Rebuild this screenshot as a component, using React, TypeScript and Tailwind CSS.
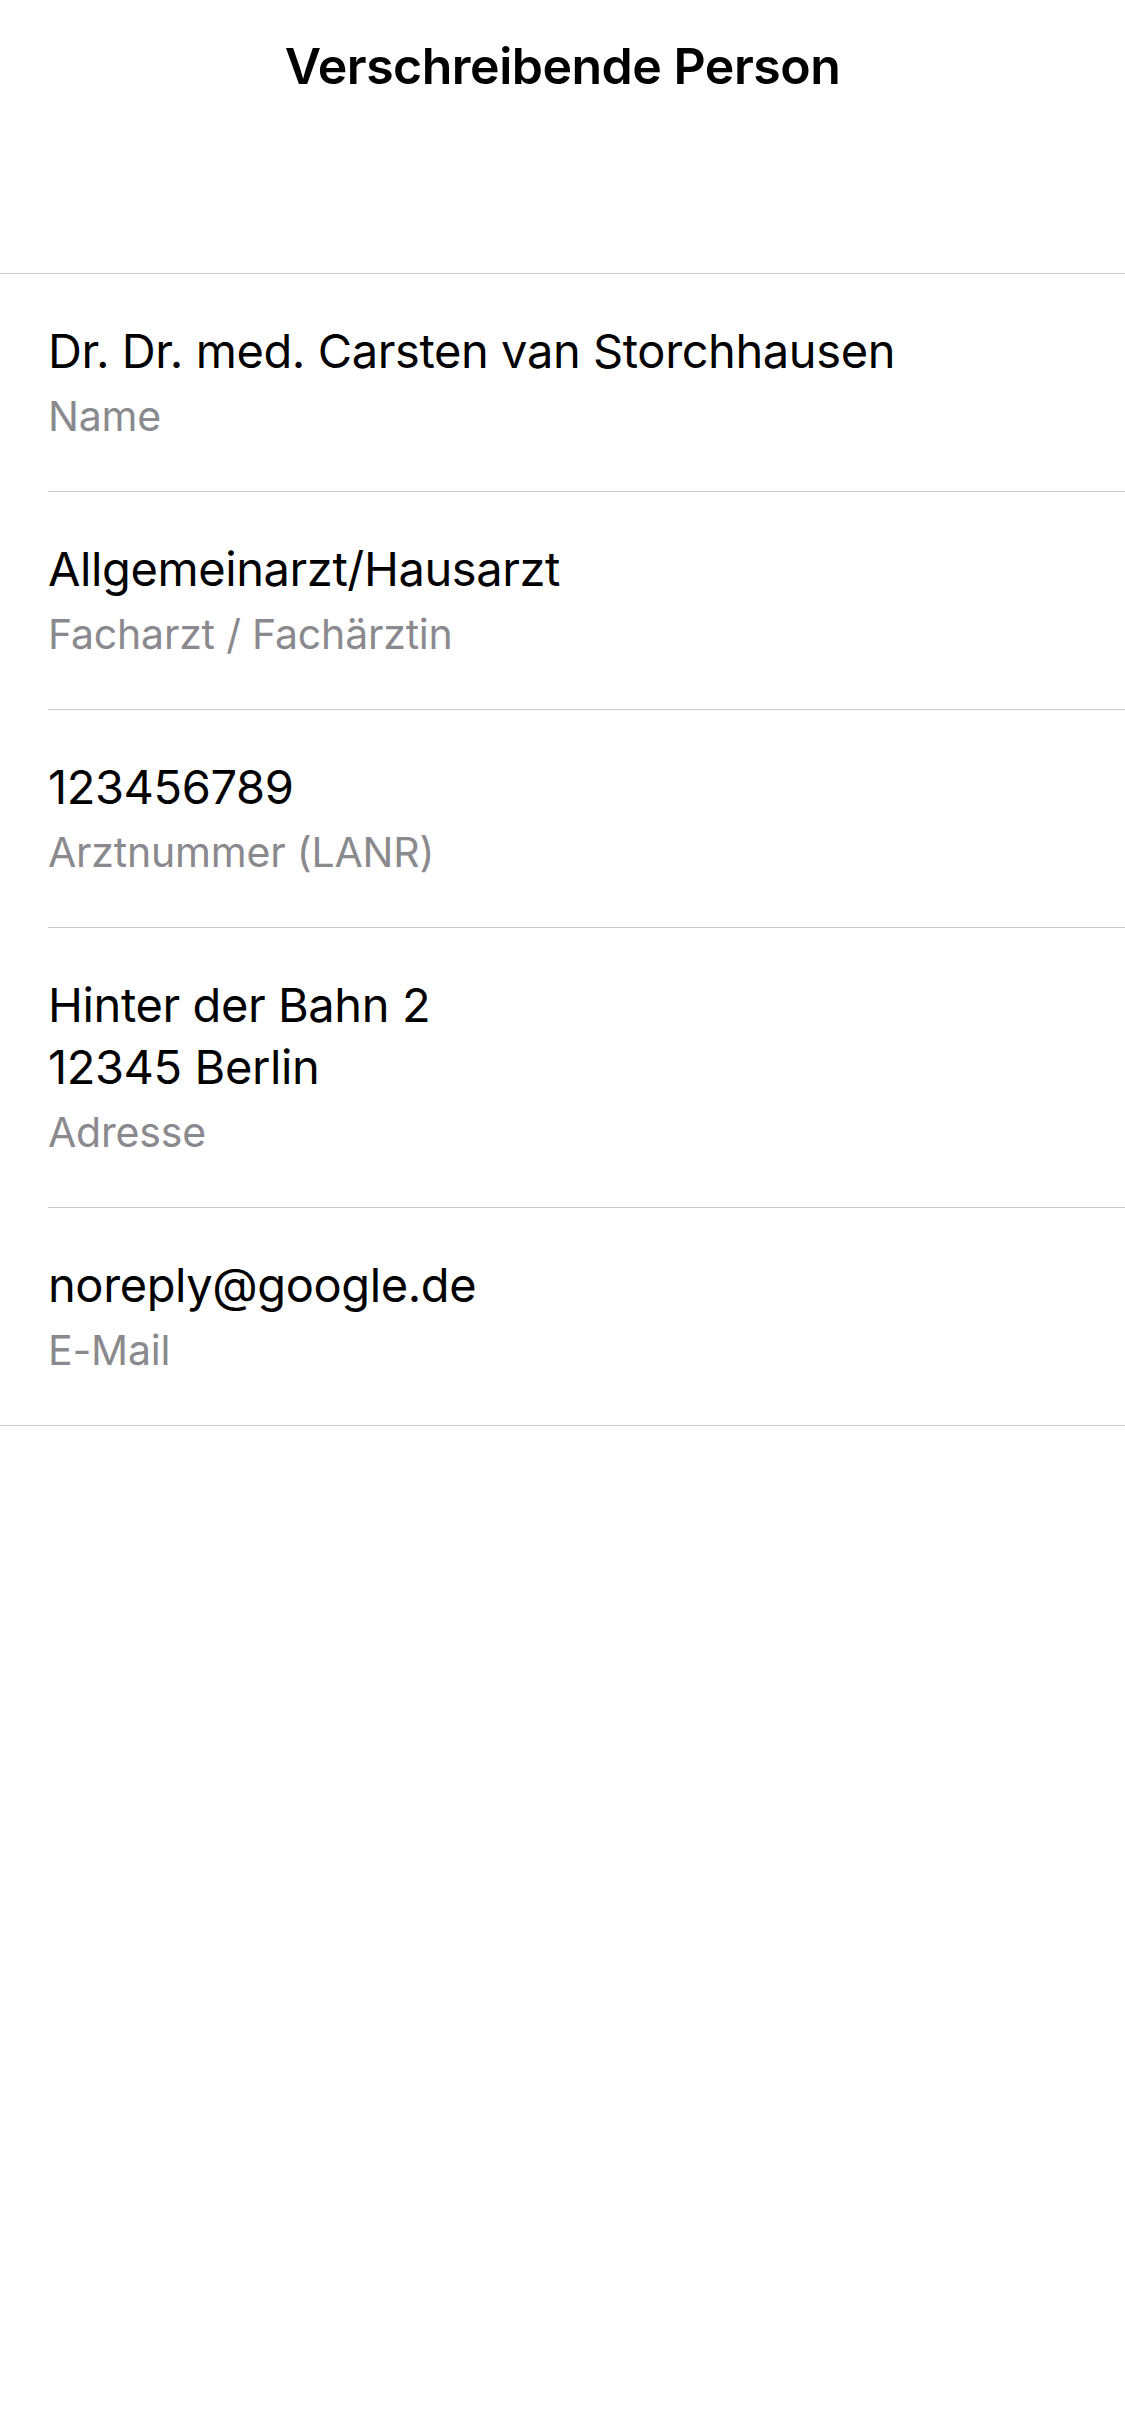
import React from "react";

const rows: { lines: string[]; label: string }[] = [
  { lines: ["Dr. Dr. med. Carsten van Storchhausen"], label: "Name" },
  { lines: ["Allgemeinarzt/Hausarzt"], label: "Facharzt / Fachärztin" },
  { lines: ["123456789"], label: "Arztnummer (LANR)" },
  { lines: ["Hinter der Bahn 2", "12345 Berlin"], label: "Adresse" },
  { lines: ["noreply@google.de"], label: "E-Mail" },
];

export default function App() {
  return (
    <div
      className="w-[1125px] h-[2436px] bg-white text-black"
      style={{ fontFamily: "Inter, 'Noto Sans', sans-serif" }}
    >
      <div className="h-[273px] flex justify-center">
        <div className="mt-[36px] text-[50px] leading-[60px] font-semibold tracking-[-0.5px]">
          Verschreibende Person
        </div>
      </div>
      <div className="border-t border-b border-[#c6c6c8]">
        {rows.map((r, i) => (
          <div key={i} className="pl-[48px]">
            <div
              className={
                "pt-[46px] pb-[48px] " +
                (i < rows.length - 1 ? "border-b border-[#c6c6c8]" : "")
              }
            >
              {r.lines.map((l, j) => (
                <div key={j} className="text-[47px] leading-[62px] tracking-[-0.4px]">
                  {l}
                </div>
              ))}
              <div className="mt-[7px] text-[41px] leading-[54px] text-[#8a8a8e] tracking-[-0.2px]">
                {r.label}
              </div>
            </div>
          </div>
        ))}
      </div>
    </div>
  );
}
